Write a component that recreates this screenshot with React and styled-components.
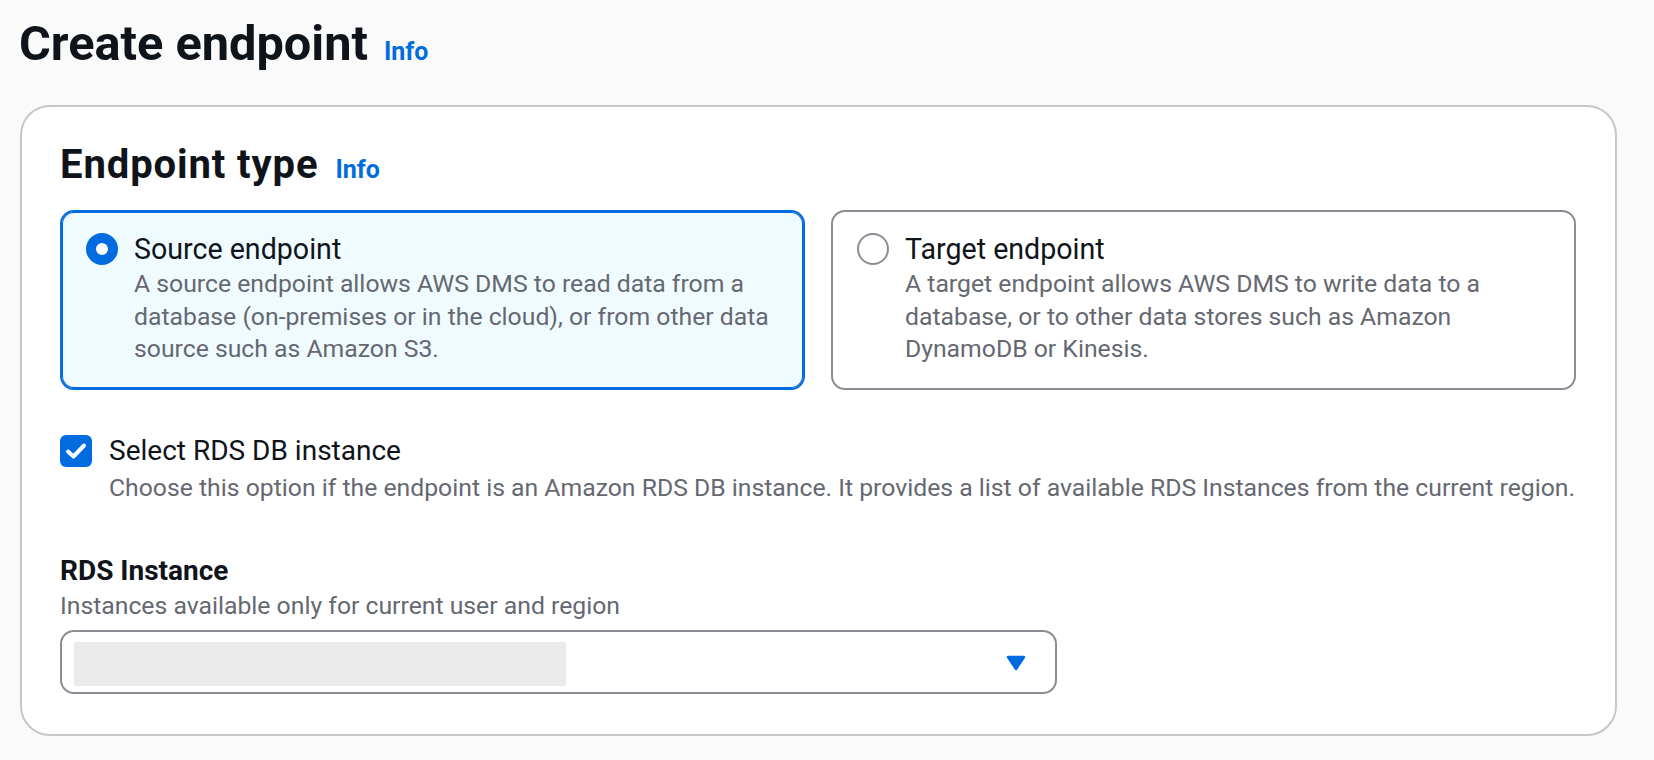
import React from "react";
import styled, { createGlobalStyle } from "styled-components";

const Global = createGlobalStyle`
  html, body { margin: 0; padding: 0; background: #fafafa; }
  body { font-family: Roboto, "Noto Sans", "Liberation Sans", sans-serif; color: #0f141a; }
  * { box-sizing: border-box; }
`;

const Page = styled.div`
  padding: 15px 0 0 20px;
  width: 1654px;
  height: 760px;
  overflow: hidden;
`;

const HeaderRow = styled.div`
  display: flex;
  align-items: baseline;
  gap: ${(p) => p.$gap || 16}px;
  margin: 0 0 ${(p) => p.$mb || 0}px ${(p) => p.$ml || 0}px;
`;

const Title = styled.h1`
  margin: 0;
  font-size: ${(p) => p.$size}px;
  line-height: ${(p) => p.$lh}px;
  font-weight: 700;
  color: #0f141a;
  letter-spacing: ${(p) => p.$ls || 0}px;
`;

const InfoLink = styled.a`
  font-size: 25px;
  font-weight: 700;
  color: #006ce0;
  text-decoration: none;
  cursor: pointer;
`;

const Card = styled.section`
  width: 1597px;
  background: #ffffff;
  border: 2px solid #c6c6cd;
  border-radius: 30px;
  padding: 34px 40px 40px 38px;
`;

const TileGrid = styled.div`
  display: grid;
  grid-template-columns: 1fr 1fr;
  gap: 26px;
  width: 1516px;
`;

const Tile = styled.label`
  display: flex;
  align-items: flex-start;
  gap: 16px;
  border: 2px solid ${(p) => (p.$selected ? "#006ce0" : "#8c8c94")};
  box-shadow: ${(p) => (p.$selected ? "inset 0 0 0 1px #006ce0" : "none")};
  background: ${(p) => (p.$selected ? "#f0fbff" : "#ffffff")};
  border-radius: 14px;
  padding: 18px 24px 22px 24px;
  cursor: pointer;
`;

const RadioDot = styled.span`
  flex: 0 0 32px;
  width: 32px;
  height: 32px;
  margin-top: 3px;
  border-radius: 50%;
  border: ${(p) => (p.$checked ? "10px solid #006ce0" : "2px solid #8c8c94")};
  background: #ffffff;
`;

const OptionText = styled.div`
  display: flex;
  flex-direction: column;
`;

const OptionLabel = styled.span`
  font-size: ${(p) => p.$size || 28}px;
  line-height: 38px;
  font-weight: ${(p) => (p.$bold ? 700 : 400)};
  color: #0f141a;
`;

const Description = styled.span`
  font-size: 24.75px;
  line-height: 32.5px;
  margin-top: ${(p) => p.$mt || 0}px;
  color: #656871;
  white-space: nowrap;
`;

const CheckRow = styled.label`
  display: flex;
  align-items: flex-start;
  gap: 17px;
  margin-top: 42px;
  cursor: pointer;
`;

const CheckBox = styled.span`
  flex: 0 0 32px;
  width: 32px;
  height: 32px;
  margin-top: 3px;
  border-radius: 6px;
  background: #006ce0;
  display: flex;
  align-items: center;
  justify-content: center;
`;

const Field = styled.div`
  display: flex;
  flex-direction: column;
  margin-top: 48px;
`;

const SelectBox = styled.div`
  margin-top: 7px;
  width: 997px;
  height: 64px;
  border: 2px solid #8c8c94;
  border-radius: 14px;
  display: flex;
  align-items: flex-start;
  justify-content: space-between;
  padding: 10px 29px 0 12px;
  background: #ffffff;
`;

const Redacted = styled.div`
  width: 492px;
  height: 44px;
  background: #ebebeb;
  border-radius: 2px;
`;

const Caret = styled.svg`
  margin-top: 13px;
`;

export default function App() {
  return (
    <>
      <Global />
      <Page>
        <HeaderRow $gap={16} $mb={32} $ml={-1}>
          <Title $size={48.7} $lh={58}>Create endpoint</Title>
          <InfoLink>Info</InfoLink>
        </HeaderRow>
        <Card>
          <HeaderRow $gap={17} $mb={21}>
            <Title as="h2" $size={40} $lh={48} $ls={0.9}>Endpoint type</Title>
            <InfoLink>Info</InfoLink>
          </HeaderRow>
          <TileGrid>
            <Tile $selected>
              <RadioDot $checked />
              <OptionText>
                <OptionLabel $size={28.6}>Source endpoint</OptionLabel>
                <Description>
                  A source endpoint allows AWS DMS to read data from a
                  <br />
                  database (on-premises or in the cloud), or from other data
                  <br />
                  source such as Amazon S3.
                </Description>
              </OptionText>
            </Tile>
            <Tile>
              <RadioDot />
              <OptionText>
                <OptionLabel $size={28.6}>Target endpoint</OptionLabel>
                <Description>
                  A target endpoint allows AWS DMS to write data to a
                  <br />
                  database, or to other data stores such as Amazon
                  <br />
                  DynamoDB or Kinesis.
                </Description>
              </OptionText>
            </Tile>
          </TileGrid>
          <CheckRow>
            <CheckBox>
              <svg width="22" height="18" viewBox="0 0 22 18">
                <path
                  d="M3 9.5 L8.5 14.5 L19 3.5"
                  fill="none"
                  stroke="#ffffff"
                  strokeWidth="4"
                  strokeLinecap="round"
                  strokeLinejoin="round"
                />
              </svg>
            </CheckBox>
            <OptionText>
              <OptionLabel>Select RDS DB instance</OptionLabel>
              <Description $mt={2}>
                Choose this option if the endpoint is an Amazon RDS DB instance. It provides a list of available RDS Instances from the current region.
              </Description>
            </OptionText>
          </CheckRow>
          <Field>
            <OptionLabel $bold>RDS Instance</OptionLabel>
            <Description>Instances available only for current user and region</Description>
            <SelectBox>
              <Redacted />
              <Caret width="20" height="16" viewBox="0 0 20 16">
                <path
                  d="M2 2 L18 2 L10 14 Z"
                  fill="#006ce0"
                  stroke="#006ce0"
                  strokeWidth="2.5"
                  strokeLinejoin="round"
                />
              </Caret>
            </SelectBox>
          </Field>
        </Card>
      </Page>
    </>
  );
}
